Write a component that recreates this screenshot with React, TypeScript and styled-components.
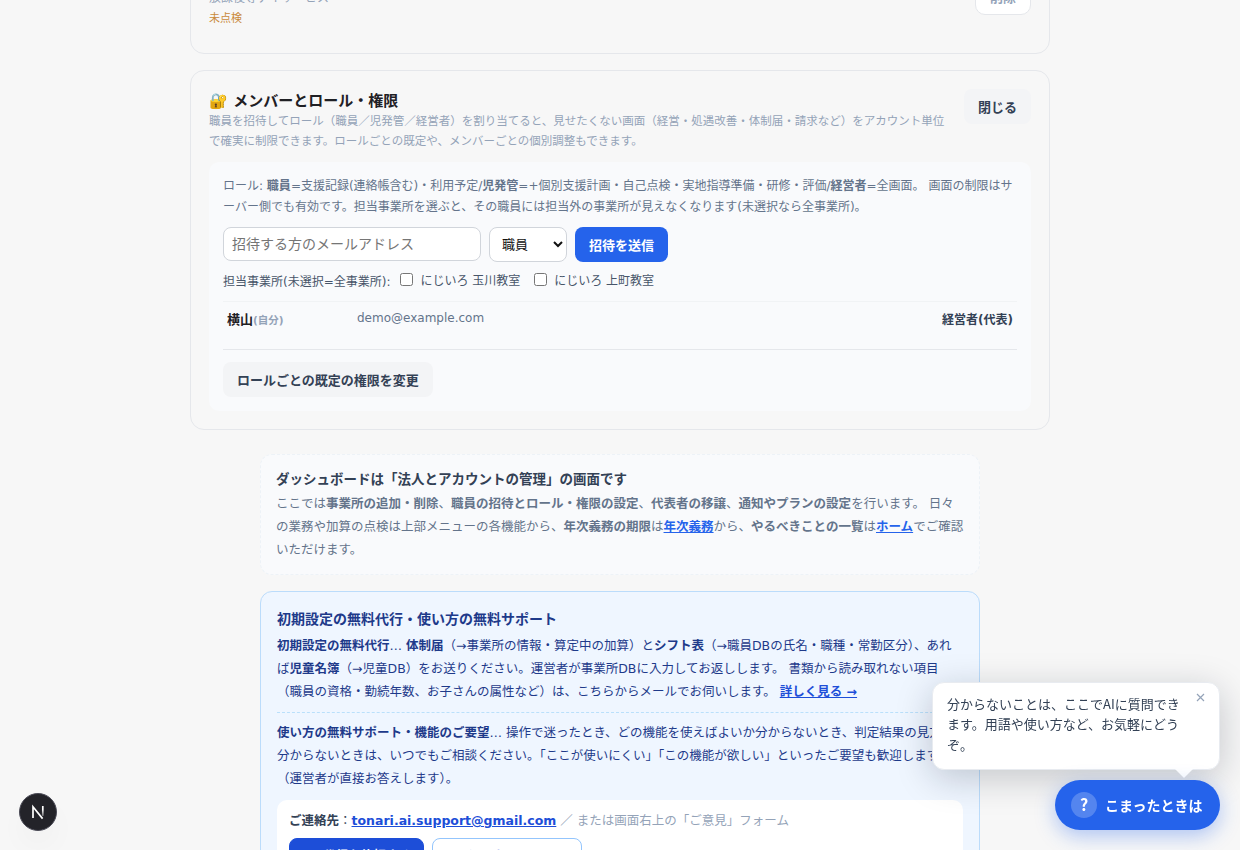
import React from "react";
import styled, { createGlobalStyle } from "styled-components";

const Global = createGlobalStyle`
  * { box-sizing: border-box; }
  html, body { margin: 0; height: 850px; overflow: hidden; background: #f7f7f7; }
  body { font-family: "DejaVu Sans", "Noto Sans CJK JP", sans-serif; color: #1f2937; }
  button, input, select { font-family: inherit; margin: 0; }
`;

const Viewport = styled.div`
  height: 850px;
  overflow: hidden;
`;

const Page = styled.main`
  display: flex;
  flex-direction: column;
  align-items: center;
  margin-top: -32px;
`;

const Card = styled.section<{ $height: number }>`
  width: 860px;
  height: ${(p) => p.$height}px;
  flex: none;
  padding: 18px;
  border: 1px solid #e5e7eb;
  border-radius: 14px;
  margin-bottom: 16px;
`;

const CardHead = styled.div`
  display: flex;
  justify-content: space-between;
  align-items: flex-start;
  gap: 12px;
`;

const FacilityMeta = styled.div`
  font-size: 12px;
  line-height: 23px;
  color: #94a3b8;
`;

const Unchecked = styled.div`
  font-size: 11px;
  line-height: 18px;
  color: #c98a3c;
`;

const DeleteButton = styled.button`
  width: 56px;
  height: 34px;
  margin-top: -6px;
  padding: 0 0 3px;
  border: 1px solid #e5e7eb;
  border-radius: 10px;
  background: #fff;
  color: #94a3b8;
  font-size: 13px;
  font-weight: 700;
`;

const Title = styled.h2`
  margin: 0;
  padding-top: 1px;
  font-size: 15px;
  line-height: 22px;
  font-weight: 700;
  color: #1f2024;
`;

const Description = styled.p`
  margin: 0;
  font-size: 11.5px;
  line-height: 19.55px;
  color: #94a3b8;
`;

const SoftButton = styled.button`
  flex: none;
  height: 35px;
  padding: 0 14px;
  border: 0;
  border-radius: 8px;
  background: #f3f4f6;
  color: #334155;
  font-size: 13px;
  font-weight: 700;
`;

const Panel = styled.div`
  height: 249px;
  margin-top: 11px;
  padding: 14px;
  border-radius: 10px;
  background: #f9fafc;
`;

const RoleNote = styled.p`
  margin: 0 0 9px;
  font-size: 12px;
  line-height: 21px;
  color: #64748b;
`;

const InviteRow = styled.div`
  display: flex;
  align-items: flex-start;
  gap: 8px;
`;

const EmailInput = styled.input`
  width: 258px;
  height: 34px;
  padding: 0 8px;
  border: 1px solid #d1d5db;
  border-radius: 8px;
  background: #fff;
  font-size: 14px;
  &::placeholder { color: #757575; }
`;

const RoleSelect = styled.select`
  width: 78px;
  height: 35px;
  padding: 0 8px;
  border: 1px solid #d1d5db;
  border-radius: 8px;
  background: #fff;
  color: #111;
  font-size: 13px;
`;

const PrimaryButton = styled.button`
  height: 35px;
  padding: 0 14px;
  border: 0;
  border-radius: 8px;
  background: #2563eb;
  color: #fff;
  font-size: 13px;
  font-weight: 700;
`;

const FacilityRow = styled.div`
  display: flex;
  align-items: center;
  height: 39px;
  padding-bottom: 3px;
  font-size: 12px;
  color: #475569;
`;

const Check = styled.label`
  display: flex;
  align-items: center;
  margin-left: 10px;
  padding-bottom: 2px;
  & + & { margin-left: 14px; }
  input { width: 13px; height: 13px; margin: 0 7px 0 0; }
`;

const MemberRow = styled.div`
  display: flex;
  align-items: flex-start;
  height: 48px;
  padding: 8px 4px;
  border-top: 1px solid #f1f3f5;
  font-size: 13px;
  line-height: 20px;
`;

const MemberName = styled.div`
  width: 130px;
  font-weight: 700;
  color: #1f2024;
  small { font-size: 10.5px; color: #94a3b8; }
`;

const MemberMail = styled.div`
  flex: 1;
  font-size: 12px;
  line-height: 16px;
  color: #64748b;
`;

const MemberRole = styled.div`
  font-size: 12px;
  font-weight: 700;
  color: #334155;
`;

const Defaults = styled.div`
  padding-top: 12px;
  border-top: 1px solid #e5e7eb;
`;

const Notice = styled.section`
  width: 720px;
  height: 121px;
  flex: none;
  margin: 8px 0 16px;
  padding: 13px 15px;
  border: 1px dashed #edf2f7;
  border-radius: 12px;
  background: #f9fafc;
`;

const NoticeTitle = styled.h3<{ $blue?: boolean }>`
  margin: 0 0 ${(p) => (p.$blue ? 3 : 1)}px;
  font-size: ${(p) => (p.$blue ? "14px" : "13.5px")};
  line-height: 23px;
  font-weight: 700;
  color: ${(p) => (p.$blue ? "#1e3a8a" : "#334155")};
`;

const Body = styled.p<{ $blue?: boolean }>`
  margin: 0;
  font-size: 12.5px;
  line-height: 23px;
  color: ${(p) => (p.$blue ? "#1e3a8a" : "#64748b")};
`;

const Link = styled.a<{ $deep?: boolean }>`
  color: ${(p) => (p.$deep ? "#1d4ed8" : "#2563eb")};
  font-weight: 700;
  text-decoration: underline;
`;

const Support = styled.section`
  width: 720px;
  height: 330px;
  flex: none;
  padding: 16px;
  border: 1px solid #bbdcfb;
  border-radius: 12px;
  background: #eff6ff;
`;

const Divider = styled.hr`
  margin: 9px 0 8px;
  border: 0;
  border-top: 1px dashed #bae0fb;
`;

const Contact = styled.div`
  height: 100px;
  margin-top: 10px;
  padding: 9px 12px;
  border-radius: 10px;
  background: #fff;
  font-size: 12.5px;
  line-height: 23px;
  color: #334155;
`;

const ContactHint = styled.span`
  color: #94a3b8;
`;

const ContactButtons = styled.div`
  display: flex;
  gap: 8px;
  margin-top: 6px;
`;

const ContactButton = styled.button<{ $filled?: boolean }>`
  width: ${(p) => (p.$filled ? 135 : 150)}px;
  height: 34px;
  padding: ${(p) => (p.$filled ? "0 0 2px" : "0")};
  border: 1px solid ${(p) => (p.$filled ? "#1d4ed8" : "#93c5fd")};
  border-radius: 8px;
  background: ${(p) => (p.$filled ? "#1d4ed8" : "#fff")};
  color: ${(p) => (p.$filled ? "#fff" : "#1d4ed8")};
  font-size: 12.5px;
  font-weight: 700;
  white-space: nowrap;
`;

const Bubble = styled.aside`
  position: fixed;
  right: 20px;
  bottom: 80px;
  width: 288px;
  height: 88px;
  padding: 11px 36px 11px 14px;
  border: 1px solid #e8ebf0;
  border-radius: 12px;
  background: #fff;
  box-shadow: 0 8px 36px rgba(15, 23, 42, 0.22);
  font-family: "Noto Sans CJK JP", sans-serif;
  font-size: 13px;
  line-height: 20.4px;
  color: #334155;
  &::after {
    content: "";
    position: absolute;
    right: 26px;
    bottom: -9px;
    border: 9px solid transparent;
    border-top-color: #fff;
    border-bottom-width: 0;
  }
`;

const Dismiss = styled.button`
  position: absolute;
  top: 6px;
  right: 11px;
  width: 16px;
  height: 16px;
  padding: 0;
  border: 0;
  background: none;
  color: #94a3b8;
  display: grid;
  place-items: center;
`;

const HelpButton = styled.button`
  position: fixed;
  right: 20px;
  bottom: 20px;
  display: flex;
  align-items: center;
  gap: 8px;
  width: 165px;
  height: 50px;
  padding: 0 0 0 16px;
  border: 0;
  border-radius: 25px;
  background: #2563eb;
  box-shadow: 0 6px 20px rgba(37, 99, 235, 0.35);
  color: #fff;
  font-family: "Noto Sans CJK JP", sans-serif;
  font-size: 14px;
  font-weight: 700;
`;

const HelpMark = styled.span`
  width: 26px;
  height: 26px;
  border-radius: 50%;
  background: rgba(255, 255, 255, 0.22);
  font-size: 16px;
  line-height: 25px;
  text-align: center;
`;

const DevBadge = styled.div`
  position: fixed;
  left: 19px;
  bottom: 19px;
  width: 38px;
  height: 38px;
  border-radius: 50%;
  box-shadow: 0 16px 32px -8px rgba(0, 0, 0, 0.08);
  svg { display: block; }
`;

export default function App() {
  return (
    <Viewport>
      <Global />
      <Page>
        <Card $height={86}>
          <CardHead>
            <div>
              <FacilityMeta>放課後等デイサービス</FacilityMeta>
              <Unchecked>未点検</Unchecked>
            </div>
            <DeleteButton>削除</DeleteButton>
          </CardHead>
        </Card>

        <Card $height={360}>
          <CardHead>
            <div>
              <Title>🔐 メンバーとロール・権限</Title>
              <Description>
                職員を招待してロール（職員／児発管／経営者）を割り当てると、見せたくない画面（経営・処遇改善・体制届・請求など）をアカウント単位で確実に制限できます。ロールごとの既定や、メンバーごとの個別調整もできます。
              </Description>
            </div>
            <SoftButton>閉じる</SoftButton>
          </CardHead>
          <Panel>
            <RoleNote>
              ロール: <b>職員</b>=支援記録(連絡帳含む)・利用予定/<b>児発管</b>=+個別支援計画・自己点検・実地指導準備・研修・評価/<b>経営者</b>=全画面。 画面の制限はサーバー側でも有効です。担当事業所を選ぶと、その職員には担当外の事業所が見えなくなります(未選択なら全事業所)。
            </RoleNote>
            <InviteRow>
              <EmailInput placeholder="招待する方のメールアドレス" />
              <RoleSelect defaultValue="staff">
                <option value="staff">職員</option>
              </RoleSelect>
              <PrimaryButton>招待を送信</PrimaryButton>
            </InviteRow>
            <FacilityRow>
              <span>担当事業所(未選択=全事業所):</span>
              <Check><input type="checkbox" />にじいろ 玉川教室</Check>
              <Check><input type="checkbox" />にじいろ 上町教室</Check>
            </FacilityRow>
            <MemberRow>
              <MemberName>横山<small>(自分)</small></MemberName>
              <MemberMail>demo@example.com</MemberMail>
              <MemberRole>経営者(代表)</MemberRole>
            </MemberRow>
            <Defaults>
              <SoftButton>ロールごとの既定の権限を変更</SoftButton>
            </Defaults>
          </Panel>
        </Card>

        <Notice>
          <NoticeTitle>ダッシュボードは「法人とアカウントの管理」の画面です</NoticeTitle>
          <Body>
            ここでは<b>事業所の追加・削除</b>、<b>職員の招待とロール・権限の設定</b>、<b>代表者の移譲</b>、<b>通知やプランの設定</b>を行います。 日々の業務や加算の点検は上部メニューの各機能から、<b>年次義務の期限</b>は<Link>年次義務</Link>から、<b>やるべきことの一覧</b>は<Link>ホーム</Link>でご確認いただけます。
          </Body>
        </Notice>

        <Support>
          <NoticeTitle $blue>初期設定の無料代行・使い方の無料サポート</NoticeTitle>
          <Body $blue>
            <b>初期設定の無料代行</b>… <b>体制届</b>（→事業所の情報・算定中の加算）と<b>シフト表</b>（→職員DBの氏名・職種・常勤区分）、あれば<b>児童名簿</b>（→児童DB）をお送りください。運営者が事業所DBに入力してお返しします。 書類から読み取れない項目（職員の資格・勤続年数、お子さんの属性など）は、こちらからメールでお伺いします。 <Link $deep>詳しく見る →</Link>
          </Body>
          <Divider />
          <Body $blue>
            <b>使い方の無料サポート・機能のご要望</b>… 操作で迷ったとき、どの機能を使えばよいか分からないとき、判定結果の見方が分からないときは、いつでもご相談ください。「ここが使いにくい」「この機能が欲しい」といったご要望も歓迎します（運営者が直接お答えします）。
          </Body>
          <Contact>
            <b>ご連絡先</b>：<Link $deep>tonari.ai.support@gmail.com</Link>
            <ContactHint> ／ または画面右上の「ご意見」フォーム</ContactHint>
            <ContactButtons>
              <ContactButton $filled>✉️ 代行を依頼する</ContactButton>
              <ContactButton>💬 使い方を相談する</ContactButton>
            </ContactButtons>
          </Contact>
        </Support>
      </Page>

      <Bubble>
        分からないことは、ここでAIに質問できます。用語や使い方など、お気軽にどうぞ。
        <Dismiss aria-label="閉じる">
          <svg width="9" height="9" viewBox="0 0 9 9" fill="none" stroke="currentColor" strokeWidth="1.2">
            <path d="M1 1l7 7M8 1l-7 7" />
          </svg>
        </Dismiss>
      </Bubble>
      <HelpButton>
        <HelpMark>?</HelpMark>
        こまったときは
      </HelpButton>
      <DevBadge>
        <svg width="38" height="38" viewBox="0 0 38 38" fill="none">
          <defs>
            <linearGradient id="stem" x1="0" y1="13" x2="0" y2="25" gradientUnits="userSpaceOnUse">
              <stop offset="0.3" stopColor="#fff" />
              <stop offset="1" stopColor="#fff" stopOpacity="0.1" />
            </linearGradient>
          </defs>
          <circle cx="19" cy="19" r="18.5" fill="#232329" stroke="#4b4b57" />
          <path d="M14 25V13.8L23.6 25.6" stroke="#fff" strokeWidth="1.7" />
          <path d="M23.8 13V23" stroke="url(#stem)" strokeWidth="1.7" />
        </svg>
      </DevBadge>
    </Viewport>
  );
}
